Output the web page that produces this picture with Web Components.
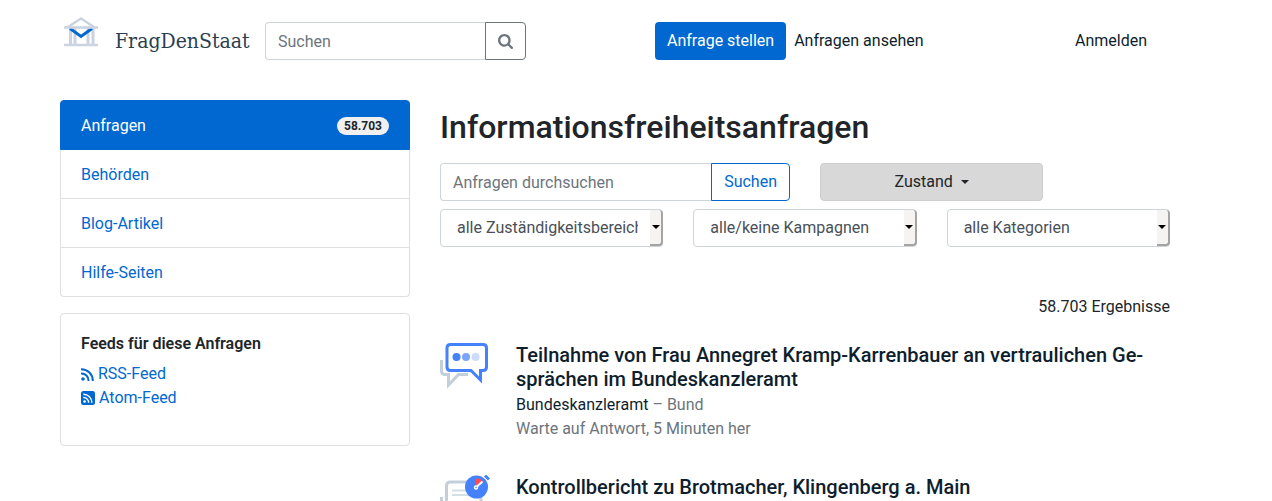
<!DOCTYPE html>
<html lang="de">
<head>
<meta charset="utf-8">
<meta name="viewport" content="width=device-width, initial-scale=1">
<title>Informationsfreiheitsanfragen – FragDenStaat</title>
<style>
  :root { --blue: #0068d0; --ink: #212529; --dark: #0f1e2d; --muted: #6c757d; --line: #dfdfdf; --field: #ced4da; }
  body { margin: 0; background: #fff; color: var(--ink); font: 16px/24px Roboto, "Noto Sans", sans-serif; }
</style>
</head>
<body>
<fds-page>
  <fds-header slot="header"></fds-header>
  <fds-menu slot="side">
    <fds-menu-item href="#anfragen" active count="58.703">Anfragen</fds-menu-item>
    <fds-menu-item href="#behoerden">Behörden</fds-menu-item>
    <fds-menu-item href="#blog">Blog-Artikel</fds-menu-item>
    <fds-menu-item href="#hilfe">Hilfe-Seiten</fds-menu-item>
  </fds-menu>
  <fds-feeds slot="side">Feeds für diese Anfragen</fds-feeds>
  <fds-filters>Informationsfreiheitsanfragen</fds-filters>
  <fds-result>
    <svg slot="icon" width="50" height="48" viewBox="0 0 50 48" fill="none">
      <path d="M1.500 17V28Q1.500 31.500 5 31.500H8.500V42L18.500 31.500H28" stroke="#c3d0d9" stroke-width="3"/>
      <path d="M10.500 1.500H43Q46.500 1.500 46.500 5V24Q46.500 27.500 43 27.500H40.500V37L31 27.500H10.500Q7 27.500 7 24V5Q7 1.500 10.500 1.500Z" fill="#fff" stroke="#4481fa" stroke-width="3"/>
      <circle cx="16.500" cy="14" r="4" fill="#4481fa"/><circle cx="26" cy="14" r="4" fill="#7ba5fb"/><circle cx="35.500" cy="14" r="4" fill="#cddcfe"/>
    </svg>
    <span slot="title">Teilnahme von Frau Annegret Kramp-Karrenbauer an vertraulichen Ge&shy;sprächen im Bundeskanzleramt</span>
    <span slot="body">Bundeskanzleramt</span>
    <span slot="level">– Bund</span>
    <span slot="status">Warte auf Antwort, 5 Minuten her</span>
  </fds-result>
  <fds-result>
    <svg slot="icon" width="50" height="48" viewBox="0 0 50 48" fill="none">
      <path d="M1.500 48V22M6.500 48V11Q6.500 7 10.500 7H37Q41 7 41 11V48" stroke="#c3d0d9" stroke-width="3"/>
      <path d="M12 15.500H30M12 20H30" stroke="#d4dee5" stroke-width="2"/>
      <circle cx="36.500" cy="12" r="11.500" fill="#4481fa"/>
      <path d="M36 12V3.500Q41 3.500 43 6.500Z" fill="#ff4d4d"/>
      <path d="M36.500 12L42.500 6.500" stroke="#fff" stroke-width="2"/>
      <circle cx="36" cy="12.500" r="1.500" fill="#4481fa" stroke="#fff" stroke-width="1.500"/>
      <path d="M45 0.500L49 4.500" stroke="#4481fa" stroke-width="3"/>
    </svg>
    <span slot="title">Kontrollbericht zu Brotmacher, Klingenberg a. Main</span>
  </fds-result>
</fds-page>

<script>
const base = `*,:host{box-sizing:border-box} a{text-decoration:none;color:var(--blue)} button,input,select{font:inherit;margin:0}
input::placeholder{color:var(--muted);opacity:1}
.group{display:flex} .group input{flex:1;min-width:0;height:38px;padding:6px 12px;border:1px solid var(--field);border-right:0;border-radius:4px 0 0 4px;background:#fff;color:var(--ink)}
.group button{height:38px;padding:0 12px;border:1px solid var(--blue);border-radius:0 4px 4px 0;background:#fff;color:var(--blue)}`;

function define(name, render) {
  customElements.define(name, class extends HTMLElement {
    constructor() {
      super();
      this.attachShadow({ mode: "open" });
    }
    connectedCallback() {
      const t = document.createElement("template");
      t.innerHTML = `<style>${base}</style>` + render(this);
      this.shadowRoot.replaceChildren(t.content.cloneNode(true));
    }
  });
}

define("fds-page", () => `<style>
  :host{display:block;max-width:1230px;padding:0 60px}
  .cols{display:grid;grid-template-columns:repeat(12,minmax(0,1fr));column-gap:30px}
  aside{grid-column:span 4;display:flex;flex-direction:column;gap:16px}
  main{grid-column:span 8;padding-top:8px}
</style>
<slot name="header"></slot>
<div class="cols"><aside><slot name="side"></slot></aside><main><slot></slot></main></div>`);

define("fds-header", () => `<style>
  :host{display:block}
  header{display:flex;align-items:center;height:100px;padding-bottom:18px}
  .brand{display:flex;align-items:center;width:205px;color:#2b3e50;font:21px/32px "DejaVu Serif Condensed","DejaVu Serif",serif;font-stretch:condensed}
  .brand svg{margin:0 17px 18px 4px}
  form{width:261px}
  .group button{border-color:var(--muted);color:var(--muted);width:41px}
  .group button svg{display:block}
  nav{display:flex;flex:1;align-items:center;gap:8px;padding:0 23px 0 129px;white-space:nowrap}
  nav a{color:var(--dark)}
  nav .primary{background:var(--blue);color:#fff;border-radius:4px;padding:7px 12px}
  nav .login{margin-left:auto}
</style>
<header>
  <a class="brand" href="#start"><svg width="34" height="30" viewBox="0 0 34 30" fill="none">
    <path d="M6.500 11V27M11 11V27M24 11V27M29 11V27" stroke="#ccd3e0" stroke-width="3"/>
    <path d="M6 11.500L17 19.500L28 11.500" stroke="#0068d0" stroke-width="3"/>
    <path d="M4 10L17 1.500L30 10" stroke="#ccd3e0" stroke-width="2.500"/>
    <path d="M0 10.500H34M0 28H34" stroke="#ccd3e0" stroke-width="2.500"/></svg>FragDenStaat</a>
  <form class="group" role="search"><input type="search" placeholder="Suchen" aria-label="Suchen"><button type="button" aria-label="Suche starten"><svg width="15" height="15" viewBox="64 128 1664 1664" fill="currentColor"><path d="M1216 832q0-185-131.500-316.500t-316.500-131.500-316.500 131.500-131.500 316.500 131.500 316.500 316.500 131.500 316.500-131.500 131.500-316.500zm512 832q0 52-38 90t-90 38q-54 0-90-38l-343-342q-179 124-399 124-143 0-273.500-55.500t-225-150-150-225-55.500-273.500 55.500-273.500 150-225 225-150 273.500-55.500 273.500 55.500 225 150 150 225 55.500 273.500q0 220-124 399l343 343q37 37 37 90z"/></svg></button></form>
  <nav><a class="primary" href="#stellen">Anfrage stellen</a><a href="#ansehen">Anfragen ansehen</a><a class="login" href="#anmelden">Anmelden</a></nav>
</header>`);

define("fds-menu", () => `<style>
  :host{display:block}
  nav{border:1px solid var(--line);border-radius:4px;border-top:0}
</style><nav><slot></slot></nav>`);

define("fds-menu-item", el => `<style>
  :host{display:block}
  a{display:flex;justify-content:space-between;align-items:center;padding:13px 20px 11px;border-bottom:1px solid var(--line)}
  :host(:last-child) a{border-bottom:0}
  :host([active]) a{background:var(--blue);color:#fff;border:1px solid var(--blue);margin:0 -1px;border-radius:4px 4px 0 0}
  .badge{background:#f0f0f0;color:var(--ink);font-size:12px;line-height:12px;font-weight:700;padding:3px 7px;border-radius:10px}
</style><a href="${el.getAttribute("href")}"><slot></slot>${el.hasAttribute("count") ? `<span class="badge">${el.getAttribute("count")}</span>` : ""}</a>`);

define("fds-feeds", () => `<style>
  :host{display:block;border:1px solid var(--line);border-radius:4px;padding:20px}
  h2{font-size:16px;line-height:20px;font-weight:600;margin:0 0 8px}
  ul{list-style:none;margin:0;padding:0 0 15px}
  a{display:flex;align-items:center;gap:4px}
</style>
<h2><slot></slot></h2>
<ul>
 <li><a href="#rss"><svg width="13" height="13" viewBox="0 0 13 13" fill="none" stroke="currentColor" stroke-width="2"><circle cx="2" cy="11" r="1.800" fill="currentColor" stroke="none"/><path d="M0 5.500A7 7 0 0 1 7.500 13M0 1.200A11.500 11.500 0 0 1 11.800 13"/></svg>RSS-Feed</a></li>
 <li><a href="#atom"><svg width="14" height="14" viewBox="0 0 14 14" fill="none"><rect width="14" height="14" rx="2.500" fill="currentColor"/><g stroke="#fff" stroke-width="1.400"><circle cx="3.600" cy="10.500" r="1.300" fill="#fff" stroke="none"/><path d="M2.300 6.500A5 5 0 0 1 7.600 11.800M2.300 3.200A8.500 8.500 0 0 1 10.900 11.800"/></g></svg>Atom-Feed</a></li>
</ul>`);

define("fds-filters", () => `<style>
  :host{display:block}
  h1{font-size:32px;line-height:38px;font-weight:500;margin:0 0 17px}
  .row{display:grid;grid-template-columns:repeat(12,minmax(0,1fr));column-gap:30px;row-gap:8px}
  .group{grid-column:span 6}
  .state{grid-column:span 4;height:38px;border:1px solid #cecece;border-radius:4px;background:#d8d8d8;color:var(--ink);display:flex;align-items:center;justify-content:center;gap:8px;padding:0}
  .state::after{content:"";border:4px solid transparent;border-top-color:currentColor;border-bottom:0}
  fds-select{grid-column:span 4}
  .spacer{grid-column:span 2}
  p{margin:48px 0 24px;text-align:right}
</style>
<h1><slot></slot></h1>
<form class="row">
  <div class="group"><input type="search" placeholder="Anfragen durchsuchen" aria-label="Anfragen durchsuchen"><button type="button">Suchen</button></div>
  <button class="state" type="button" aria-haspopup="true">Zustand</button><div class="spacer"></div>
  <fds-select label="Zuständigkeitsbereich" option="alle Zuständigkeitsbereiche"></fds-select>
  <fds-select label="Kampagne" option="alle/keine Kampagnen"></fds-select>
  <fds-select label="Kategorie" option="alle Kategorien"></fds-select>
</form>
<p>58.703 Ergebnisse</p>`);

define("fds-select", el => `<style>
  :host{display:block;position:relative}
  select{appearance:none;display:block;width:100%;height:38px;padding:0 24px 0 16px;border:1px solid var(--field);border-radius:4px;background:#fff;color:#495057}
  .arrow{position:absolute;top:1px;bottom:1px;right:0;width:13px;display:grid;place-items:center;background:#f5f4f2;border:solid #a6a4a2;border-width:0 2px 2px 0;border-radius:0 4px 4px 0;pointer-events:none}
  .arrow::after{content:"";border:4px solid transparent;border-top-color:#000;border-bottom:0}
</style><select aria-label="${el.getAttribute("label")}"><option>${el.getAttribute("option")}</option></select><span class="arrow"></span>`);

define("fds-result", () => `<style>
  :host{display:block;margin-bottom:34px}
  :host(:last-child){margin-bottom:0}
  article{display:grid;grid-template-columns:50px minmax(0,1fr);column-gap:26px}
  h2{font-size:20px;line-height:24px;font-weight:500;margin:0 0 2px}
  a{color:var(--dark)}
  p{margin:0;color:var(--muted)}
</style>
<article><slot name="icon"></slot><div>
  <h2><a href="#anfrage"><slot name="title"></slot></a></h2>
  <p><a href="#behoerde"><slot name="body"></slot></a> <slot name="level"></slot></p>
  <p><slot name="status"></slot></p>
</div></article>`);
</script>
</body>
</html>
